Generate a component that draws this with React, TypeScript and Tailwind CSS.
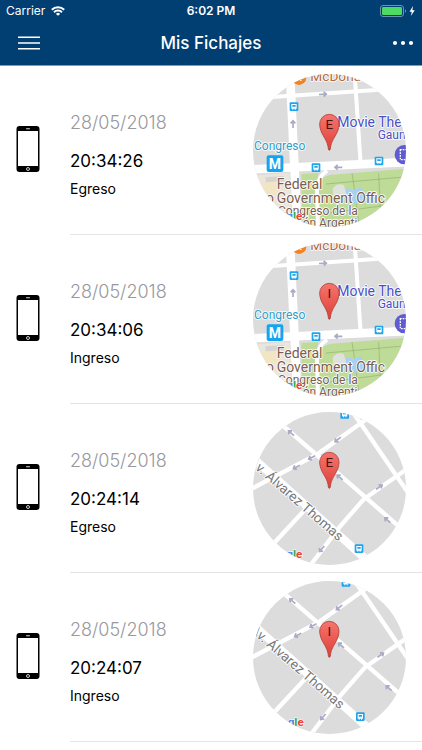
import type { ReactNode } from 'react'

type Place = 'congreso' | 'alvarez' | 'thomas'

const FICHAJES: { date: string; time: string; kind: string; place: Place }[] = [
  { date: '28/05/2018', time: '20:34:26', kind: 'Egreso', place: 'congreso' },
  { date: '28/05/2018', time: '20:34:06', kind: 'Ingreso', place: 'congreso' },
  { date: '28/05/2018', time: '20:24:14', kind: 'Egreso', place: 'alvarez' },
  { date: '28/05/2018', time: '20:24:07', kind: 'Ingreso', place: 'thomas' },
]

export default function App() {
  return (
    <div className="min-h-screen bg-white font-[Inter,sans-serif] text-black">
      <header className="border-b border-[#7f9db8] bg-[#013e72] text-white">
        <StatusBar />
        <NavBar />
      </header>
      <main>
        <ul>
          {FICHAJES.map((f) => (
            <li key={f.time} className="flex">
              <div className="flex w-14 shrink-0 items-center justify-center pb-1">
                <PhoneIcon />
              </div>
              <div className="ml-3.5 flex h-[169px] flex-1 items-center justify-between border-b border-[#e4e4e6] pr-4">
                <div className="pt-2.5">
                  <p className="text-lg leading-6 font-light text-[#98989d]">{f.date}</p>
                  <p className="mt-4 text-[17px] leading-5">{f.time}</p>
                  <p className="mt-2 text-sm leading-5">{f.kind}</p>
                </div>
                <MapThumb place={f.place} letter={f.kind[0]} />
              </div>
            </li>
          ))}
        </ul>
      </main>
    </div>
  )
}

function StatusBar() {
  return (
    <div className="grid h-[21px] grid-cols-3 items-center px-1.5 text-xs leading-4">
      <div className="flex items-center gap-1.5">
        <span>Carrier</span>
        <svg viewBox="0 0 14 10" className="h-2.5 w-3.5" fill="none" stroke="currentColor" strokeWidth="2">
          <path d="M.8 3.7a8.8 8.8 0 0 1 12.4 0M3 6.2a5.7 5.7 0 0 1 8 0" />
          <path d="M7 9.8 4.9 7.9a3 3 0 0 1 4.2 0z" fill="currentColor" stroke="none" />
        </svg>
      </div>
      <span className="text-center font-semibold">6:02 PM</span>
      <svg viewBox="0 0 36 12" className="h-3 w-9 justify-self-end">
        <rect x=".5" y=".5" width="23" height="11" rx="2.5" fill="none" stroke="#6d93b4" />
        <rect x="2" y="2" width="20" height="8" rx="1.2" fill="#4cd964" />
        <path d="M25 4.2a2 2 0 0 1 0 3.6z" fill="#6d93b4" />
        <path d="M33 1 29.5 6.7h2.3L30.8 11l4-5.8h-2.4z" fill="#fff" />
      </svg>
    </div>
  )
}

function NavBar() {
  return (
    <div className="grid h-11 grid-cols-[1fr_auto_1fr] items-center px-2">
      <button type="button" aria-label="Menú" className="justify-self-start pl-2.5">
        <svg viewBox="0 0 22 14" className="h-3.5 w-[22px]" stroke="currentColor" strokeWidth="1.6">
          <path d="M0 1.2h22M0 7h22M0 12.8h22" />
        </svg>
      </button>
      <h1 className="text-[17px] leading-6 font-medium">Mis Fichajes</h1>
      <button type="button" aria-label="Más opciones" className="justify-self-end">
        <svg viewBox="0 0 22 6" className="h-1.5 w-[22px]" fill="currentColor">
          <circle cx="3" cy="3" r="2.1" />
          <circle cx="11" cy="3" r="2.1" />
          <circle cx="19" cy="3" r="2.1" />
        </svg>
      </button>
    </div>
  )
}

function PhoneIcon() {
  return (
    <svg viewBox="0 0 24 46" className="h-[46px] w-6">
      <rect x=".5" y="0" width="23" height="46" rx="3" />
      <rect x="2" y="5" width="20" height="35" fill="#fff" />
      <rect x="10" y="2.2" width="4" height="1" rx=".5" fill="#ddd" />
      <circle cx="12" cy="43" r="1.5" fill="none" stroke="#fff" strokeWidth=".8" />
    </svg>
  )
}

function MapThumb({ place, letter }: { place: Place; letter: string }) {
  return (
    <svg
      viewBox="23 20 459 459"
      className="size-[153px] shrink-0 rounded-full bg-[#dddcdc]"
      fontFamily="Roboto, sans-serif"
    >
      {place === 'congreso' && <CongresoMap />}
      {place === 'alvarez' && <AlvarezMap />}
      {place === 'thomas' && (
        <g transform="translate(4 -3)">
          <AlvarezMap />
        </g>
      )}
      <Pin letter={letter} />
    </svg>
  )
}

function Pin({ letter }: { letter: string }) {
  return (
    <g>
      <defs>
        <linearGradient id="pin" x1="0" y1="0" x2="0" y2="1">
          <stop offset="0" stopColor="#f5756d" />
          <stop offset="1" stopColor="#dc4038" />
        </linearGradient>
      </defs>
      <path
        d="M252 249c-3 0-3-5-4-12-4-24-25-38-25-67a29 29 0 0 1 58 0c0 29-21 43-25 67-1 7-1 12-4 12z"
        fill="url(#pin)"
        stroke="#b3403a"
        strokeWidth="2.5"
      />
      <text x="252" y="184" fontSize="40" textAnchor="middle" fill="#4a1210">
        {letter}
      </text>
    </g>
  )
}

function Bus({ x, y }: { x: number; y: number }) {
  return (
    <g transform={`translate(${x} ${y})`}>
      <rect x="-13" y="-13" width="26" height="26" rx="3" fill="#1ea5ee" />
      <path d="M-8-8H8V6H5v3H2V6h-4v3h-3V6h-3z" fill="#fff" />
      <path d="M-5-5H5v5H-5z" fill="#1ea5ee" />
    </g>
  )
}

function Arrow({ x, y, angle }: { x: number; y: number; angle: number }) {
  return (
    <path
      d="M-12 0H9M2-7l8 7-8 7"
      transform={`translate(${x} ${y}) rotate(${angle})`}
      fill="none"
      stroke="#a9abc4"
      strokeWidth="5"
    />
  )
}

function Label({ x, y, size, color, children }: { x: number; y: number; size: number; color: string; children: ReactNode }) {
  return (
    <text x={x} y={y} fontSize={size} fill={color} stroke="#fff" strokeWidth="5" strokeLinejoin="round" paintOrder="stroke">
      {children}
    </text>
  )
}

function GoogleMark() {
  return (
    <text x="123" y="459" fontSize="35" fontWeight="700" stroke="#fff" strokeWidth="3" paintOrder="stroke">
      <tspan fill="#4285f4">g</tspan>
      <tspan fill="#34a853">l</tspan>
      <tspan fill="#ea4335">e</tspan>
    </text>
  )
}

function CongresoMap() {
  return (
    <g>
      <path d="M20 325l112-8 12 165H20z" fill="#ebe6dc" />
      <path d="M60 330l56-4 2 16-56 4z" fill="#d6d4d0" />
      <path d="M50 346l50-4 3 40-45 4z" fill="#f2e5c4" />
      <path d="M168 320l50-3-6 165h-40z" fill="#bfdb98" />
      <path d="M222 478l-4-110q2-40 40-46l230-18v174z" fill="#bfdb98" />
      <path d="M242 350l244-22M320 318l4 24 18 140M228 440l254-34M400 318l6 120" fill="none" stroke="#94b070" strokeWidth="2" />
      <path d="M262 364q14-20 34-10l6 24-14 22-24-8z" fill="#dfe1dc" />
      <path d="M302 362l22 6 20-8 14 16-4 24-26 10-26-14z" fill="#a9d0f2" />
      <g fill="none" stroke="#fff">
        <path d="M20 93l465-31" strokeWidth="12" />
        <path d="M328 20l18 270" strokeWidth="12" />
        <path d="M134 20l22 460" strokeWidth="26" />
        <path d="M20 306l465-22" strokeWidth="26" />
        <path d="M218 480l-3-110q0-40 30-60" strokeWidth="12" />
      </g>
      <Arrow x={233} y={81} angle={-3} />
      <Arrow x={143} y={170} angle={-90} />
      <Arrow x={279} y={300} angle={180} />
      <Bus x={146} y={118} />
      <Bus x={212} y={301} />
      <Bus x={401} y={281} />
      <circle cx="161" cy="31" r="22" fill="#f58220" />
      <path d="M150 22l18 18M168 22l-14 18" stroke="#fff" strokeWidth="4" />
      <Label x={195} y={42} size={41} color="#b5683a">McDona</Label>
      <Label x={276} y={179} size={42} color="#4a4ec4">Movie The</Label>
      <Label x={397} y={216} size={36} color="#4a4ec4">Gaun</Label>
      <circle cx="477" cy="262" r="29" fill="#5f5cd2" />
      <path d="M465 247v30h20v-30z" fill="none" stroke="#fff" strokeWidth="4" strokeDasharray="5 3" />
      <Label x={26} y={247} size={36} color="#2f9cc9">Congreso</Label>
      <rect x="64" y="264" width="50" height="50" rx="6" fill="#12a5f0" />
      <text x="89" y="304" fontSize="42" fontWeight="700" textAnchor="middle" fill="#fff">M</text>
      <Label x={94} y={364} size={42} color="#7a5c50">Federal</Label>
      <Label x={62} y={406} size={42} color="#7a5c50">o</Label>
      <Label x={94} y={406} size={42} color="#7a5c50">Government Offic</Label>
      <Label x={98} y={444} size={36} color="#7a5c50">Congreso de la</Label>
      <Label x={172} y={480} size={36} color="#7a5c50">ón Argenti</Label>
      <GoogleMark />
    </g>
  )
}

function AlvarezMap() {
  return (
    <g>
      <g fill="none" stroke="#fff">
        <path d="M112 60l345 300" strokeWidth="13" />
        <path d="M10 255l210-111L365 40" strokeWidth="13" />
        <path d="M315 10l45 65 130 190" strokeWidth="13" />
        <path d="M490 187l-135 95-70 80-90 118" strokeWidth="13" />
        <path d="M180 312l-100 108" strokeWidth="13" />
        <path d="M20 155L365 465" strokeWidth="24" />
      </g>
      <Arrow x={137} y={83} angle={-139} />
      <Arrow x={277} y={103} angle={142} />
      <Arrow x={199} y={157} angle={152} />
      <Arrow x={153} y={185} angle={152} />
      <Arrow x={283} y={216} angle={-139} />
      <Arrow x={402} y={245} angle={-35} />
      <Arrow x={426} y={344} angle={-139} />
      <Arrow x={229} y={431} angle={130} />
      <Bus x={298} y={27} />
      <Bus x={341} y={430} />
      <g transform="translate(14 168) rotate(41)">
        <Label x={0} y={8} size={41} color="#77777a">Av. Álvarez Thomas</Label>
      </g>
      <GoogleMark />
    </g>
  )
}
